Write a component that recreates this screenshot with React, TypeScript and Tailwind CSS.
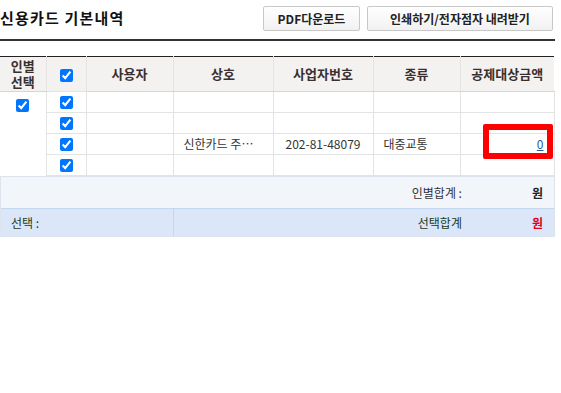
import React from 'react'

const FONT = '"Noto Sans CJK KR", "Noto Sans", sans-serif'

function Check() {
  return (
    <input
      type="checkbox"
      defaultChecked
      className="m-0 h-[13px] w-[13px] accent-[#0075ff] align-middle"
    />
  )
}

const ROWS = [
  { user: '', name: '', biz: '', kind: '', amount: '' },
  { user: '', name: '', biz: '', kind: '', amount: '' },
  { user: '', name: '신한카드 주식회사', biz: '202-81-48079', kind: '대중교통', amount: '0' },
  { user: '', name: '', biz: '', kind: '', amount: '' },
]

export default function App() {
  return (
    <div className="w-[561px] h-[393px] bg-white text-[#333]" style={{ fontFamily: FONT }}>
      <div className="w-[555px]">
        {/* title bar */}
        <div className="flex h-[41px] items-center justify-between border-b-2 border-[#333] pb-[2px]">
          <h2 className="text-[15px] font-bold tracking-[1.2px] text-[#111]">신용카드 기본내역</h2>
          <div className="flex gap-[7px] pr-[2px]">
            <button className="h-[25px] w-[97px] rounded-[2px] border border-[#c8c8c8] bg-gradient-to-b from-white to-[#f1f1f1] text-[12px] font-bold text-[#222]">
              PDF다운로드
            </button>
            <button className="h-[25px] w-[186px] rounded-[2px] border border-[#c8c8c8] bg-gradient-to-b from-white to-[#f1f1f1] text-[12px] font-bold text-[#222]">
              인쇄하기/전자점자 내려받기
            </button>
          </div>
        </div>

        {/* table */}
        <div className="relative mt-[15px]">
          <table className="w-[554px] table-fixed border-collapse border-t border-[#222] text-[12px]">
            <colgroup>
              <col className="w-[46px]" />
              <col className="w-[40px]" />
              <col className="w-[87px]" />
              <col className="w-[100px]" />
              <col className="w-[100px]" />
              <col className="w-[87px]" />
              <col className="w-[94px]" />
            </colgroup>
            <thead>
              <tr className="h-[35px] bg-[#f3f2f0] text-[13px] font-bold text-[#3a2f2f]">
                <th className="border-b border-[#d6d6d6]">
                  <span className="block leading-[16px]">인별</span>
                  <span className="block leading-[16px]">선택</span>
                </th>
                <th className="border-b border-l border-[#e3e3e3]"><Check /></th>
                <th className="border-b border-l border-[#e3e3e3] border-b-[#d6d6d6]">사용자</th>
                <th className="border-b border-l border-[#e3e3e3] border-b-[#d6d6d6]">상호</th>
                <th className="border-b border-l border-[#e3e3e3] border-b-[#d6d6d6]">사업자번호</th>
                <th className="border-b border-l border-[#e3e3e3] border-b-[#d6d6d6]">종류</th>
                <th className="border-b border-l border-[#e3e3e3] border-b-[#d6d6d6]">공제대상금액</th>
              </tr>
            </thead>
            <tbody>
              {ROWS.map((r, i) => (
                <tr key={i} className="h-[21px]">
                  {i === 0 && (
                    <td rowSpan={4} className="pt-[3px] text-center align-top">
                      <Check />
                    </td>
                  )}
                  <td className="border border-[#e3e3e3] text-center leading-none"><Check /></td>
                  <td className="border border-[#e3e3e3]">{r.user}</td>
                  <td className="truncate border border-[#e3e3e3] px-[10px] text-center">{r.name}</td>
                  <td className="border border-[#e3e3e3] text-center">{r.biz}</td>
                  <td className="border border-[#e3e3e3] px-[10px]">{r.kind}</td>
                  <td className="border border-[#e3e3e3] pr-[10px] text-right">
                    {r.amount && <a className="text-[#1f5b9a] underline">{r.amount}</a>}
                  </td>
                </tr>
              ))}
            </tbody>
          </table>

          {/* highlight box */}
          <div className="absolute left-[483px] top-[68px] h-[35px] w-[70px] rounded-[2px] border-[6px] border-[#ff0000]" />

          {/* totals */}
          <div className="w-[555px] border border-[#dde4ee] text-[12px]">
            <div className="flex h-[31px] items-center justify-end bg-[#f2f6fb] pr-[11px]">
              <span className="text-[#333]">인별합계 :</span>
              <span className="ml-[70px] font-bold text-[#222]">원</span>
            </div>
            <div className="flex h-[28px] items-center border-t border-[#c5d7ee] bg-[#dbe7f8]">
              <div className="flex h-full w-[173px] items-center border-r border-[#c5d7ee] pl-[10px] text-[#1a3a1a]">
                선택 :
              </div>
              <div className="flex flex-1 items-center justify-end pr-[11px]">
                <span className="text-[#1a3a1a]">선택합계</span>
                <span className="ml-[70px] font-bold text-[#e0001a]">원</span>
              </div>
            </div>
          </div>
        </div>
      </div>
    </div>
  )
}
